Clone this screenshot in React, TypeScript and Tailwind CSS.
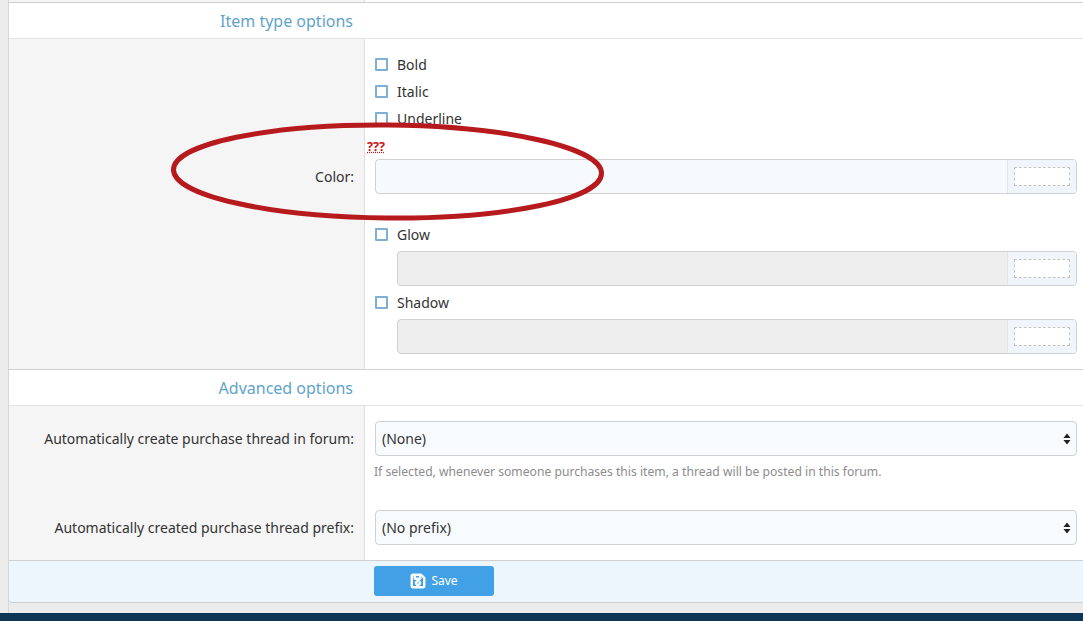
import { FaRegSave } from 'react-icons/fa';

function CheckRow({ label }: { label: string }) {
  return (
    <label className="flex h-[27px] items-center">
      <span className="ml-[10px] h-[13px] w-[13px] rounded-[1px] border-2 border-[#7fb0d4] bg-white" />
      <span className="ml-[9px] text-[#333]">{label}</span>
    </label>
  );
}

function ColorInput({ disabled, indent }: { disabled?: boolean; indent?: boolean }) {
  return (
    <div className={`flex h-[35px] overflow-hidden rounded-[4px] border border-[#d0d0d0] ${indent ? 'ml-[32px]' : 'ml-[10px]'} ${disabled ? 'bg-[#eeeeee]' : 'bg-[#f7fafd]'}`}>
      <div className="flex-1" />
      <div className="flex w-[69px] items-center justify-center border-l border-[#dfe6ec] bg-[#eff5fb]">
        <div className="h-[19px] w-[56px] border border-dashed border-[#c4c4c4] bg-white" />
      </div>
    </div>
  );
}

function FakeSelect({ value }: { value: string }) {
  return (
    <div className="ml-[10px] flex h-[35px] items-center justify-between rounded-[4px] border border-[#d0d0d0] bg-[#f8fbfe] pl-[6px] pr-[5px] text-[#333]">
      <span>{value}</span>
      <svg width="8" height="12" viewBox="0 0 8 12">
        <path d="M4 0.5 L7.5 5 H0.5 Z M4 11.5 L0.5 7 H7.5 Z" fill="#222" />
      </svg>
    </div>
  );
}

function SectionHeader({ title }: { title: string }) {
  return (
    <div className="flex h-[36px] items-center border-b border-[#e4e4e4] bg-white">
      <h3 className="w-[344px] text-right text-[16px] text-[#5fa3c9]">{title}</h3>
    </div>
  );
}

export default function App() {
  return (
    <div className="relative h-[621px] w-[1083px] overflow-hidden bg-[#ebebeb] font-['Noto_Sans',sans-serif] text-[14px]">
      <div className="ml-[8px] h-[613px] border-l border-[#d6d6d6]">
        {/* Previous row tail */}
        <div className="flex h-[3px] border-b border-[#cfcfcf] bg-white">
          <div className="w-[356px] border-r border-[#dedede] bg-[#f5f5f5]" />
        </div>

        <SectionHeader title="Item type options" />
        <div className="flex h-[331px] border-b border-[#cfcfcf]">
          <div className="w-[356px] border-r border-[#dedede] bg-[#f5f5f5] pr-[10px] pt-[127px] text-right text-[#333]">
            Color:
          </div>
          <div className="flex-1 bg-white pr-[6px] pt-[12px]">
            <CheckRow label="Bold" />
            <CheckRow label="Italic" />
            <CheckRow label="Underline" />
            <div className="ml-[2px] flex h-[27px] items-end pb-[6px] text-[12.5px] font-bold leading-none text-[#c11] underline decoration-dotted">
              ???
            </div>
            <ColorInput />
            <div className="mt-[27px]">
              <CheckRow label="Glow" />
            </div>
            <div className="mt-[3px]">
              <ColorInput disabled indent />
            </div>
            <div className="mt-[3px]">
              <CheckRow label="Shadow" />
            </div>
            <div className="mt-[3px]">
              <ColorInput disabled indent />
            </div>
          </div>
        </div>

        <SectionHeader title="Advanced options" />
        <div className="grid grid-cols-[356px_1fr] grid-rows-[89px_65px]">
          <div className="border-r border-[#dedede] bg-[#f5f5f5] pr-[10px] pt-[22px] text-right text-[#333]">
            Automatically create purchase thread in forum:
          </div>
          <div className="bg-white pr-[6px] pt-[15px]">
            <FakeSelect value="(None)" />
            <p className="ml-[9px] mt-[7px] text-[12.15px] text-[#8c8c8c]">
              If selected, whenever someone purchases this item, a thread will be posted in this forum.
            </p>
          </div>
          <div className="border-r border-[#dedede] bg-[#f5f5f5] pr-[10px] pt-[22px] text-right text-[#333]">
            Automatically created purchase thread prefix:
          </div>
          <div className="bg-white pr-[6px] pt-[15px]">
            <FakeSelect value="(No prefix)" />
          </div>
        </div>

        {/* Form footer */}
        <div className="flex h-[43px] items-start rounded-bl-[4px] border-y border-[#cfcfcf] bg-[#edf6fd] pl-[365px] pt-[5px]">
          <button className="flex h-[30px] w-[120px] items-center justify-center gap-[5px] rounded-[3px] bg-[#42a1e6] text-[12px] text-white">
            <FaRegSave className="h-[16px] w-[16px]" stroke="currentColor" strokeWidth={30} />
            Save
          </button>
        </div>
      </div>
      <div className="h-[8px] bg-[#0f3555]" />

      {/* Red annotation drawn over the screenshot */}
      <svg className="pointer-events-none absolute left-0 top-0" width="1083" height="621">
        <ellipse cx="387.5" cy="171.5" rx="214" ry="46.5" fill="none" stroke="#b71a1c" strokeWidth="5" transform="rotate(0.5 387 172)" />
      </svg>
    </div>
  );
}
